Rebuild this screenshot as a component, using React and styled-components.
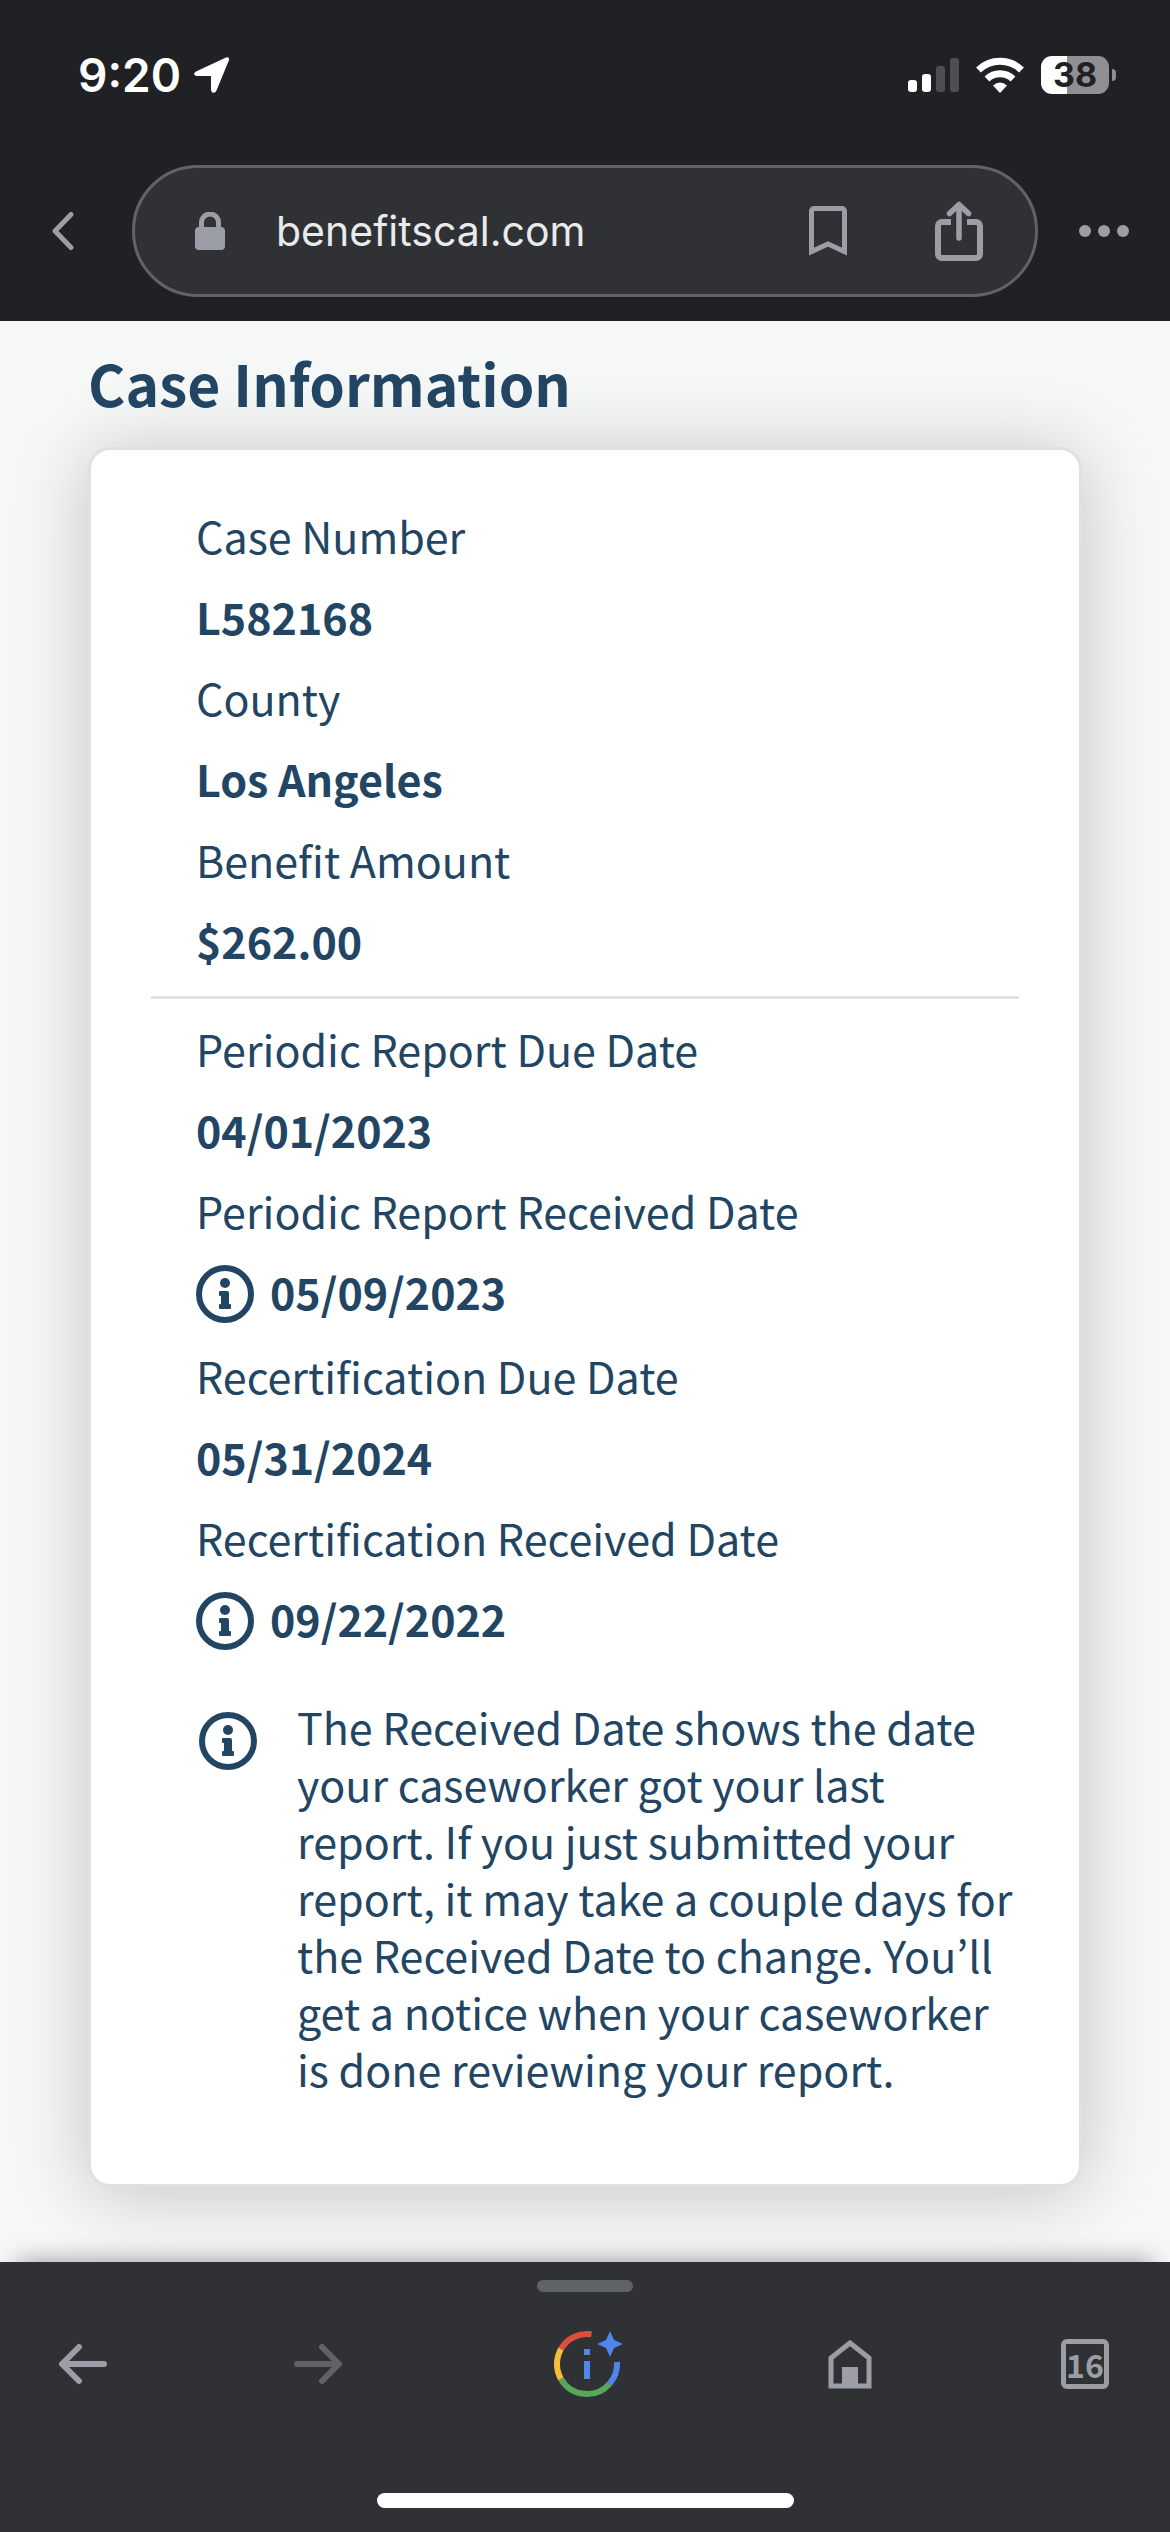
import styled, { createGlobalStyle } from "styled-components";

const caseRows = [
  { label: "Case Number", value: "L582168" },
  { label: "County", value: "Los Angeles" },
  { label: "Benefit Amount", value: "$262.00" },
];

const reportRows = [
  { label: "Periodic Report Due Date", value: "04/01/2023" },
  { label: "Periodic Report Received Date", value: "05/09/2023", info: true },
  { label: "Recertification Due Date", value: "05/31/2024" },
  { label: "Recertification Received Date", value: "09/22/2022", info: true },
];

function InfoIcon() {
  return (
    <InfoSvg width="58" height="58" viewBox="0 0 58 58" aria-hidden="true">
      <circle cx="29" cy="29" r="26" fill="none" stroke="currentColor" strokeWidth="6" />
      <circle cx="29" cy="18" r="5" fill="currentColor" />
      <path
        d="M24 26h7a2 2 0 0 1 2 2v11h1a1 1 0 0 1 1 1v3a1 1 0 0 1-1 1H24a1 1 0 0 1-1-1v-3a1 1 0 0 1 1-1h1v-8h-1a1 1 0 0 1-1-1v-3a1 1 0 0 1 1-1z"
        fill="currentColor"
      />
    </InfoSvg>
  );
}

function DetailRows({ rows }) {
  return (
    <Details>
      {rows.map((row) => (
        <div key={row.label}>
          <Label>{row.label}</Label>
          <Value $info={row.info}>
            {row.info && <InfoIcon />}
            {row.value}
          </Value>
        </div>
      ))}
    </Details>
  );
}

function StatusBar() {
  return (
    <Status>
      <Clock>
        9:20
        <svg width="38" height="38" viewBox="0 0 38 38" aria-hidden="true">
          <path
            d="M3 15.500L33 1.500q3.500-1 3 2.500L23.500 34.500q-1.500 3-4 2-1.500-.8-1.500-3V20H4q-2.500 0-3-2 0-1.500 2-2.500z"
            fill="#fff"
          />
        </svg>
      </Clock>
      <StatusIcons>
        <svg width="51" height="34" viewBox="0 0 51 34" aria-hidden="true">
          <rect x="0" y="22" width="9" height="12" rx="3" fill="#fff" />
          <rect x="14" y="16" width="9" height="18" rx="3" fill="#fff" />
          <rect x="28" y="8" width="9" height="26" rx="3" fill="#4d4e50" />
          <rect x="42" y="0" width="9" height="34" rx="3" fill="#4d4e50" />
        </svg>
        <svg width="48" height="36" viewBox="0 0 48 36" aria-hidden="true">
          <path d="M2.500 13a31 31 0 0 1 43 0" fill="none" stroke="#fff" strokeWidth="7" />
          <path d="M11 22a19 19 0 0 1 26 0" fill="none" stroke="#fff" strokeWidth="7" />
          <path d="M24 36l-7-7.500q7-6 14 0z" fill="#fff" />
        </svg>
        <Battery>
          <BatteryLevel>38</BatteryLevel>
          <BatteryTip />
        </Battery>
      </StatusIcons>
    </Status>
  );
}

function AddressBar() {
  return (
    <AddressRow>
      <IconButton aria-label="Back">
        <svg width="24" height="40" viewBox="0 0 24 40">
          <path d="M20 3.500L4 20l16 16.500" fill="none" stroke="currentColor" strokeWidth="5" strokeLinecap="round" strokeLinejoin="round" />
        </svg>
      </IconButton>
      <Address>
        <svg width="30" height="38" viewBox="0 0 30 38" aria-hidden="true">
          <rect x="0" y="15" width="30" height="23" rx="4" fill="currentColor" />
          <path d="M6.500 17v-6.500a8.500 8.500 0 0 1 17 0V17" fill="none" stroke="currentColor" strokeWidth="5" />
        </svg>
        <UrlInput aria-label="Address" defaultValue="benefitscal.com" />
        <IconButton aria-label="Bookmark">
          <svg width="38" height="50" viewBox="0 0 38 50">
            <path d="M2.500 45.500V5a2.500 2.500 0 0 1 2.500-2.500h28a2.500 2.500 0 0 1 2.500 2.500v40.500L19 38z" fill="none" stroke="currentColor" strokeWidth="5" />
          </svg>
        </IconButton>
        <IconButton aria-label="Share">
          <svg width="48" height="60" viewBox="0 0 48 60">
            <path d="M16 21H7a4 4 0 0 0-4 4v28a4 4 0 0 0 4 4h34a4 4 0 0 0 4-4V25a4 4 0 0 0-4-4h-9" fill="none" stroke="currentColor" strokeWidth="6" />
            <path d="M24 37V4M14.500 12.500L24 3.500l9.500 9" fill="none" stroke="currentColor" strokeWidth="5.500" strokeLinecap="round" strokeLinejoin="round" />
          </svg>
        </IconButton>
      </Address>
      <IconButton aria-label="More">
        <svg width="52" height="14" viewBox="0 0 52 14" fill="currentColor">
          <circle cx="7" cy="7" r="6" />
          <circle cx="26" cy="7" r="6" />
          <circle cx="45" cy="7" r="6" />
        </svg>
      </IconButton>
    </AddressRow>
  );
}

function ArrowIcon({ flip }) {
  return (
    <svg width="48" height="42" viewBox="0 0 48 42">
      <path
        d={flip ? "M3 21h38M28 4l17 17-17 17" : "M45 21H7M20 4L3 21l17 17"}
        fill="none"
        stroke="currentColor"
        strokeWidth="6"
        strokeLinecap="round"
        strokeLinejoin="round"
      />
    </svg>
  );
}

function BottomBar() {
  return (
    <Toolbar>
      <Handle />
      <ToolbarRow>
        <IconButton aria-label="Go back">
          <ArrowIcon />
        </IconButton>
        <IconButton aria-label="Go forward" disabled>
          <ArrowIcon flip />
        </IconButton>
        <AssistButton aria-label="Page insights">
          <svg width="80" height="68" viewBox="0 0 80 68">
            <g fill="none" strokeWidth="6">
              <path d="M17 19A30 30 0 0 1 47.500 4.300" stroke="#dd4f3d" />
              <path d="M17 49A30 30 0 0 1 17 19" stroke="#f6bd3c" />
              <path d="M65.600 53.700A30 30 0 0 1 17 49" stroke="#57a75b" />
              <path d="M73 32A30 30 0 0 1 65.600 53.700" stroke="#5086ec" />
            </g>
            <path d="M40 19h6v6h-6zM40 31h6v18h-6z" fill="#5086ec" />
            <path d="M66 1l4 9 9 4-9 4-4 9-4-9-9-4 9-4z" fill="#5086ec" />
          </svg>
        </AssistButton>
        <IconButton aria-label="Home">
          <svg width="48" height="50" viewBox="0 0 48 50">
            <path d="M5 47V19L24 4l19 15v28z" fill="none" stroke="currentColor" strokeWidth="5" />
            <rect x="16" y="28" width="16" height="20" fill="currentColor" />
          </svg>
        </IconButton>
        <TabsButton aria-label="16 open tabs">16</TabsButton>
      </ToolbarRow>
      <HomeIndicator />
    </Toolbar>
  );
}

function App() {
  return (
    <Screen>
      <GlobalStyle />
      <TopBar>
        <StatusBar />
        <AddressBar />
      </TopBar>
      <Page>
        <Title>Case Information</Title>
        <Card>
          <DetailRows rows={caseRows} />
          <Divider />
          <DetailRows rows={reportRows} />
          <Note>
            <InfoIcon />
            <p>
              The Received Date shows the date your caseworker got your last
              report. If you just submitted your report, it may take a couple
              days for the Received Date to change. You’ll get a notice when
              your caseworker is done reviewing your report.
            </p>
          </Note>
        </Card>
      </Page>
      <BottomBar />
    </Screen>
  );
}

export default App;

const GlobalStyle = createGlobalStyle`
  * {
    box-sizing: border-box;
  }
  body {
    margin: 0;
    background: #f6f8f8;
  }
  svg {
    display: block;
    flex-shrink: 0;
  }
`;

/* the KR cut keeps the curly apostrophe proportional */
const Screen = styled.div`
  display: flex;
  flex-direction: column;
  min-height: 100vh;
  font-family: "Noto Sans CJK KR", sans-serif;
`;

const TopBar = styled.header`
  background: #202124;
  padding-bottom: 24px;
  z-index: 1;
`;

const Status = styled.div`
  display: flex;
  justify-content: space-between;
  align-items: center;
  height: 149px;
  padding: 0 54px 0 78px;
  color: #fff;
  font-family: Inter, sans-serif;
`;

const Clock = styled.div`
  display: flex;
  align-items: center;
  gap: 12px;
  font-size: 46px;
  font-weight: 600;
`;

const StatusIcons = styled.div`
  display: flex;
  align-items: center;
  gap: 17px;
`;

const Battery = styled.div`
  display: flex;
  align-items: center;
  gap: 3px;
`;

const BatteryLevel = styled.span`
  width: 68px;
  height: 38px;
  border-radius: 11px;
  background: linear-gradient(to right, #fff 38%, #909092 38%);
  color: #202124;
  font-size: 34px;
  font-weight: 700;
  line-height: 38px;
  text-align: center;
`;

const BatteryTip = styled.span`
  width: 4px;
  height: 12px;
  border-radius: 0 4px 4px 0;
  background: #909092;
`;

const IconButton = styled.button`
  display: flex;
  align-items: center;
  justify-content: center;
  padding: 0;
  border: none;
  background: none;
  color: #9b9ea6;
  cursor: pointer;

  &:disabled {
    color: #5f6368;
    cursor: default;
  }
`;

const AddressRow = styled.div`
  display: flex;
  align-items: center;
  gap: 40px;
  padding: 0 40px 0 51px;
  margin-top: 16px;

  & > button:first-child {
    margin-right: 17px;
  }
`;

const Address = styled.div`
  display: flex;
  align-items: center;
  flex: 1;
  min-width: 0;
  height: 132px;
  padding: 0 52px 0 60px;
  border: 3px solid #626367;
  border-radius: 66px;
  background: #303134;
  color: #9b9ea6;

  button + button {
    margin-left: 88px;
  }
`;

const UrlInput = styled.input`
  flex: 1;
  min-width: 0;
  margin-left: 51px;
  padding: 0;
  border: none;
  outline: none;
  background: none;
  color: #e8eaed;
  font-family: Inter, sans-serif;
  font-size: 41px;
`;

const Page = styled.main`
  flex: 1;
  padding: 22px 88px 75px;
  color: #214562;
`;

const Title = styled.h1`
  margin: 0 0 26px;
  font-size: 57px;
  font-weight: 700;
  line-height: 78px;
`;

const Card = styled.section`
  padding: 45px 60px 87px;
  border: 3px solid #dfe0e5;
  border-radius: 22px;
  background: #fff;
  box-shadow: 0 6px 75px rgba(0, 0, 0, 0.21);
  font-size: 43px;
`;

const Details = styled.dl`
  margin: 0;
  padding: 0 45px;
  line-height: 81px;
`;

const Label = styled.dt``;

const InfoSvg = styled.svg`
  margin-top: 14px;
`;

const Value = styled.dd`
  display: flex;
  align-items: flex-start;
  gap: 16px;
  margin: 0;
  padding-bottom: ${({ $info }) => ($info ? "3px" : "0")};
  font-weight: 700;
`;

const Divider = styled.hr`
  height: 3px;
  margin: 15px 0 9px;
  border: none;
  background: #dfe1e6;
`;

const Note = styled.div`
  display: flex;
  gap: 40px;
  margin-top: 36px;
  padding-left: 48px;

  p {
    margin: 0;
    line-height: 57px;
  }
`;

const Toolbar = styled.footer`
  display: flex;
  flex-direction: column;
  align-items: center;
  padding: 18px 0 24px;
  background: #303134;
  box-shadow: 0 -18px 24px -18px rgba(0, 0, 0, 0.4);
`;

const Handle = styled.div`
  width: 96px;
  height: 12px;
  border-radius: 6px;
  background: #5f6368;
`;

const ToolbarRow = styled.nav`
  display: flex;
  align-items: center;
  justify-content: space-between;
  align-self: stretch;
  height: 144px;
  padding: 0 61px 0 59px;
`;

const AssistButton = styled(IconButton)`
  width: 110px;
`;

const TabsButton = styled(IconButton)`
  width: 48px;
  height: 50px;
  border: 5px solid #9b9ea6;
  border-radius: 6px;
  font-family: "Noto Sans CJK KR", sans-serif;
  font-size: 32px;
  font-weight: 700;
  line-height: 40px;
`;

const HomeIndicator = styled.div`
  width: 417px;
  height: 15px;
  margin-top: 57px;
  border-radius: 8px;
  background: #fff;
`;
